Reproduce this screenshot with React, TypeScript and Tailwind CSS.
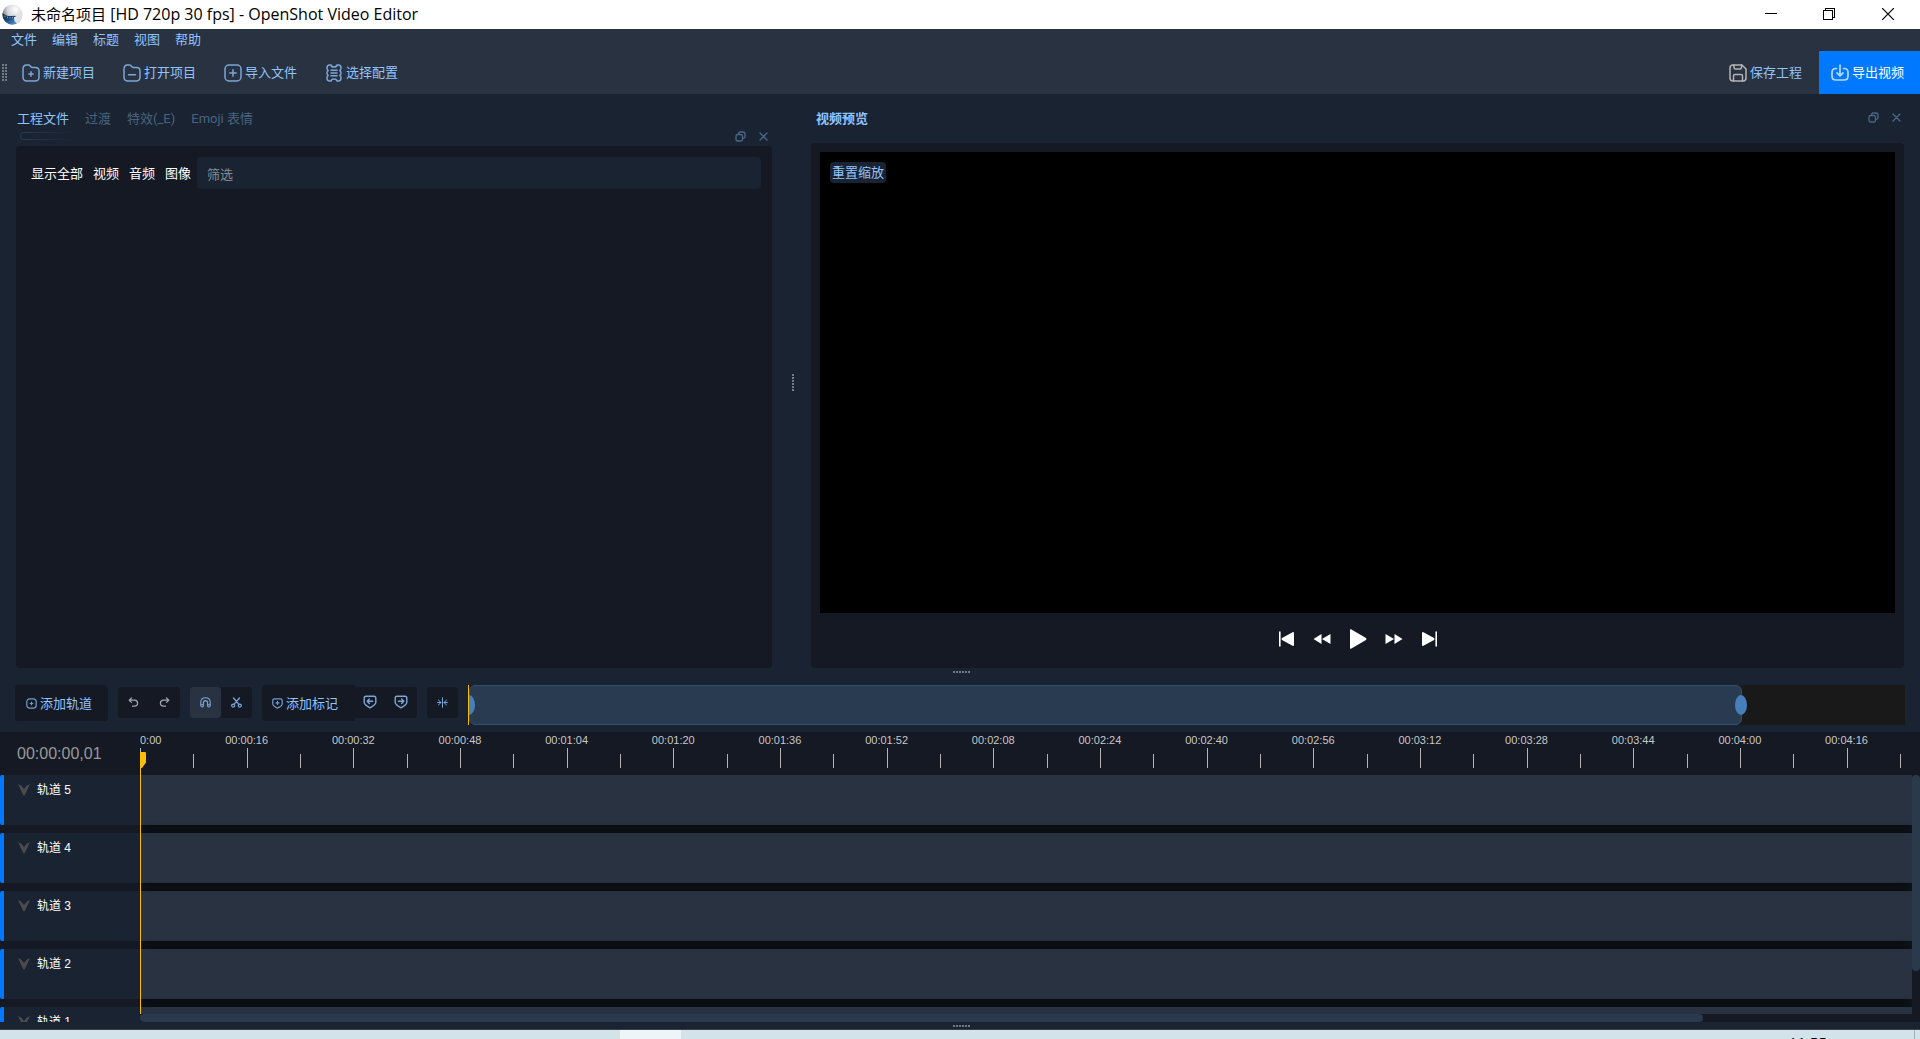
import type { ReactNode } from "react";

type Kids = { children?: ReactNode };

function Svg({ size, className = "", box = 18, width = 1.5, children }: Kids & { size: number; className?: string; box?: number; width?: number }) {
  return (
    <svg
      width={size}
      height={size}
      viewBox={`0 0 ${box} ${box}`}
      fill="none"
      stroke="currentColor"
      strokeWidth={width}
      strokeLinecap="round"
      strokeLinejoin="round"
      className={`shrink-0 ${className}`}
      aria-hidden="true"
    >
      {children}
    </svg>
  );
}

const FOLDER = "M1 5.5 Q1 1 4.5 1 H6.5 Q7.6 1 8.3 2 L8.9 2.8 Q9.4 3.4 10.3 3.4 H13.5 Q17 3.4 17 7 V13 Q17 17 13 17 H5 Q1 17 1 13 Z";

const NewProjectIcon = () => (
  <Svg size={18} className="text-[#7ba6da]">
    <path d={FOLDER} />
    <path d="M9 7.8V12.2M6.8 10H11.2" />
  </Svg>
);
const OpenProjectIcon = () => (
  <Svg size={18} className="text-[#7ba6da]">
    <path d={FOLDER} />
    <path d="M5.5 10.8H12.5" />
  </Svg>
);
const ImportIcon = () => (
  <Svg size={18} className="text-[#7ba6da]">
    <rect x="1" y="1" width="16" height="16" rx="4" />
    <path d="M9 5.8V12.2M5.8 9H12.2" />
  </Svg>
);
const ProfileIcon = () => (
  <Svg size={18} className="text-[#7ba6da]">
    <path d="M4.5 1H6Q6.4 3 9 3T12 1H13.5Q16 1 16 4Q16 6 14.8 6.7Q16 7.4 16 9T14.8 11.3Q16 12 16 14Q16 17 13.5 17H12Q11.6 15 9 15T6 17H4.5Q2 17 2 14Q2 12 3.2 11.3Q2 10.6 2 9T3.2 6.7Q2 6 2 4Q2 1 4.5 1Z" />
    <path d="M6 6.3H12M6 9H12M6 11.7H12" />
  </Svg>
);
const SaveIcon = () => (
  <Svg size={18} className="text-[#b4b4b4]">
    <path d="M4 1H13L17 5V14Q17 17 14 17H4Q1 17 1 14V4Q1 1 4 1Z" />
    <path d="M5 1V3.5Q5 5 6.5 5H11Q12.5 5 12.5 3.5V1M4.5 17V12Q4.5 10.5 6 10.5H12Q13.5 10.5 13.5 12V17" />
  </Svg>
);
const ExportIcon = () => (
  <Svg size={18} className="text-[#b8d9ff]" width={1.7}>
    <path d="M5.5 4.5H5Q1 4.5 1 8.5V12Q1 16 5 16H13Q17 16 17 12V8.5Q17 4.5 13 4.5H12.5" />
    <path d="M9 1V11.5M6 8.8L9 11.8L12 8.8" />
  </Svg>
);

function WindowLogo() {
  return (
    <svg width="21" height="21" viewBox="0 0 21 21" aria-hidden="true">
      <defs>
        <radialGradient id="ball" cx="0.65" cy="0.25" r="0.8">
          <stop offset="0" stopColor="#ffffff" />
          <stop offset="0.5" stopColor="#d3d7da" />
          <stop offset="1" stopColor="#50565c" />
        </radialGradient>
        <linearGradient id="lens" x1="0" y1="0" x2="0.7" y2="1">
          <stop offset="0" stopColor="#1b2c3f" />
          <stop offset="0.5" stopColor="#14406f" />
          <stop offset="1" stopColor="#4c8cc6" />
        </linearGradient>
      </defs>
      <circle cx="10.5" cy="10.5" r="10" fill="url(#ball)" />
      <path d="M0.6 9 Q4 12.6 9.5 12 Q13.5 11.6 14.5 12.4 Q15.5 16.5 13.5 19.8 Q8 21.6 4 18.2 Q0 14.5 0.6 9Z" fill="url(#lens)" />
      <path d="M12 13.2 Q17 12 20.2 8.5 Q21 15.6 15 19.4 Q11.5 17.5 12 13.2Z" fill="#dfe4e8" />
      <path d="M3 11.6V13.2M5.5 12.6V14.2M8 13V14.6M10.5 12.8V14.4" stroke="#7d97ae" strokeWidth="1" fill="none" />
    </svg>
  );
}

function FloatAndClose() {
  return (
    <div className="flex items-center gap-[13px] text-[#4b6787]">
      <button type="button" aria-label="浮动" className="flex">
        <Svg size={11} box={11} width={1.3}>
          <rect x="1" y="3.5" width="6.5" height="6.5" rx="1.8" />
          <path d="M3.6 3Q3.6 1 5.4 1H8Q10 1 10 3V5.4Q10 7.2 8 7.4" />
        </Svg>
      </button>
      <button type="button" aria-label="关闭" className="flex">
        <Svg size={9} box={9} width={1.3}>
          <path d="M1 1L8 8M8 1L1 8" />
        </Svg>
      </button>
    </div>
  );
}

function Dots({ rows = 1, cols = 1 }: { rows?: number; cols?: number }) {
  return (
    <div className="flex gap-px">
      {Array.from({ length: cols }, (_, c) => (
        <div key={c} className="flex flex-col gap-px">
          {Array.from({ length: rows }, (_, r) => (
            <span key={r} className="size-0.5 bg-[#747b85]" />
          ))}
        </div>
      ))}
    </div>
  );
}

function TitleBar() {
  return (
    <header className="flex h-[29px] shrink-0 items-center bg-white text-black">
      <div className="flex items-center gap-2 pl-0.5">
        <WindowLogo />
        <h1 className="pb-0.5 text-base leading-5 [font-family:'Open_Sans','Noto_Sans_CJK_SC',sans-serif]">
          <span className="text-[15px]">未命名项目</span> [HD 720p 30 fps] - OpenShot Video Editor
        </h1>
      </div>
      <div className="mr-0.5 ml-auto flex pb-px">
        <button type="button" aria-label="最小化" className="flex w-[58px] justify-center">
          <svg width="12" height="12" shapeRendering="crispEdges"><path d="M0 5.5H12" stroke="#000" /></svg>
        </button>
        <button type="button" aria-label="还原" className="flex w-[58px] justify-center">
          <svg width="12" height="12" fill="none" stroke="#000" shapeRendering="crispEdges">
            <path d="M0.5 2.5H9.5V11.5H0.5ZM2.5 2.5V0.5H11.5V9.5H9.5" />
          </svg>
        </button>
        <button type="button" aria-label="关闭窗口" className="flex w-[60px] justify-center">
          <svg width="12" height="12"><path d="M0 0L12 12M12 0L0 12" stroke="#000" strokeWidth="1.2" /></svg>
        </button>
      </div>
    </header>
  );
}

function ToolButton({ icon, children }: Kids & { icon: ReactNode }) {
  return (
    <button type="button" className="flex w-[101px] items-center gap-[3px] text-left">
      {icon}
      <span className="whitespace-nowrap">{children}</span>
    </button>
  );
}

function MenuAndToolbar() {
  return (
    <div className="shrink-0 bg-[#283241]">
      <nav className="flex h-[22px] items-center gap-[15px] px-[11px]">
        {["文件", "编辑", "标题", "视图", "帮助"].map((m) => (
          <button type="button" key={m}>{m}</button>
        ))}
      </nav>
      <div className="flex h-[43px] items-center pl-0.5">
        <Dots rows={6} cols={2} />
        <div className="flex pl-[15px]">
          <ToolButton icon={<NewProjectIcon />}>新建项目</ToolButton>
          <ToolButton icon={<OpenProjectIcon />}>打开项目</ToolButton>
          <ToolButton icon={<ImportIcon />}>导入文件</ToolButton>
          <ToolButton icon={<ProfileIcon />}>选择配置</ToolButton>
        </div>
        <button type="button" className="mr-[17px] ml-auto flex items-center gap-[3px]">
          <SaveIcon />
          保存工程
        </button>
        <button type="button" className="flex h-full w-[101px] items-center gap-[3px] bg-[#0078ff] pl-3 text-white">
          <ExportIcon />
          导出视频
        </button>
      </div>
    </div>
  );
}

function FilesDock() {
  return (
    <section className="flex min-w-0 flex-[756] flex-col">
      <div className="flex h-[52px] flex-col">
        <div role="tablist" className="flex h-[38px] shrink-0 items-start gap-4 px-px pt-4">
          <button type="button" role="tab" aria-selected="true">工程文件</button>
          {["过渡", "特效(_E)", "Emoji 表情"].map((t) => (
            <button type="button" role="tab" aria-selected="false" key={t} className="text-[#49637f]">{t}</button>
          ))}
        </div>
        <div className="flex h-2 items-center justify-between pr-1 pl-1">
          <span className="h-2 w-[54px] rounded-full bg-linear-to-r from-[#283d58] to-[#192332] p-px">
            <span className="block h-full rounded-full bg-[#192332]" />
          </span>
          <FloatAndClose />
        </div>
      </div>
      <div className="flex-1 rounded bg-[#141923] px-[11px] py-[11px]">
        <div className="flex items-center text-white">
          <div className="flex gap-2.5 pt-0.5 pl-1">
            {["显示全部", "视频", "音频", "图像"].map((t) => (
              <button type="button" key={t}>{t}</button>
            ))}
          </div>
          <input
            type="text"
            aria-label="筛选"
            placeholder="筛选"
            className="ml-[6px] h-8 min-w-0 flex-1 rounded bg-[#192332] px-2.5 pt-0.5 outline-none placeholder:text-[#868b93]"
          />
        </div>
      </div>
    </section>
  );
}

function PlaybackControls() {
  return (
    <div className="flex h-[55px] items-center justify-center gap-[18px] pb-[3px] text-white [&_svg]:fill-current">
      <button type="button" aria-label="跳到开头">
        <svg width="17" height="20" viewBox="0 0 17 20"><path d="M1 2.5H2.6V17.5H1ZM15 3Q16 3 16 4V16Q16 17 15 17L4 11Q2.8 10 4 9Z" /></svg>
      </button>
      <button type="button" aria-label="快退">
        <svg width="18" height="20" viewBox="0 0 18 20"><path d="M8.5 5V15L0.5 10ZM17.5 5V15L9 10Z" /></svg>
      </button>
      <button type="button" aria-label="播放">
        <svg width="18" height="20" viewBox="0 0 18 20"><path d="M1 1Q1 0 2 0.3L17 9Q18 10 17 11L2 19.7Q1 20 1 19Z" /></svg>
      </button>
      <button type="button" aria-label="快进">
        <svg width="18" height="20" viewBox="0 0 18 20"><path d="M0.5 5V15L9 10ZM9.5 5V15L17.5 10Z" /></svg>
      </button>
      <button type="button" aria-label="跳到结尾">
        <svg width="17" height="20" viewBox="0 0 17 20"><path d="M14.4 2.5H16V17.5H14.4ZM2 3Q1 3 1 4V16Q1 17 2 17L13 11Q14.2 10 13 9Z" /></svg>
      </button>
    </div>
  );
}

function PreviewDock() {
  return (
    <section className="flex min-w-0 flex-[1093] flex-col">
      <div className="flex h-[49px] items-start justify-between pt-4 pr-[3px] pl-[5px]">
        <h2 className="font-bold">视频预览</h2>
        <div className="pt-0.5"><FloatAndClose /></div>
      </div>
      <div className="flex flex-1 flex-col rounded bg-[#141923] px-[9px] pt-[9px]">
        <div className="flex-1 bg-black p-2.5">
          <button type="button" className="flex h-[21px] items-center rounded bg-[#192332] px-0.5">重置缩放</button>
        </div>
        <PlaybackControls />
      </div>
    </section>
  );
}

const Shield = ({ size = 14, children }: Kids & { size?: number }) => (
  <Svg size={size} box={14} width={1.4}>
    <path d="M3 1.2H11Q12.8 1.2 12.8 3V7.5Q12.8 9.6 7 12.8Q1.2 9.6 1.2 7.5V3Q1.2 1.2 3 1.2Z" />
    {children}
  </Svg>
);

function SmallButton({ label, active, children }: Kids & { label: string; active?: boolean }) {
  return (
    <button
      type="button"
      aria-label={label}
      className={`flex h-[31px] w-[31px] items-center justify-center rounded-[3px] pr-px pb-px text-[#7ba6da] ${active ? "bg-[#283241]" : ""}`}
    >
      {children}
    </button>
  );
}

function TimelineToolbar() {
  return (
    <div className="flex h-[47px] shrink-0 items-start pr-[15px] pl-[15px]">
      <button type="button" className="flex h-9 w-[93px] items-center gap-[3px] rounded bg-[#141923] pt-px pl-[11px]">
        <Svg size={11} box={11} width={1.2} className="text-[#6f9dd0]">
          <rect x="0.8" y="0.8" width="9.4" height="9.4" rx="3" />
          <path d="M5.5 4.2V6.8M4.2 5.5H6.8" />
        </Svg>
        添加轨道
      </button>
      <div className="mt-0.5 ml-2.5 flex rounded bg-[#141923]">
        <SmallButton label="撤销">
          <Svg size={11} box={11} width={1.2} className="text-[#a0a4aa]">
            <path d="M3.5 1L1.2 3.2L3.5 5.4M1.4 3.2H6.5Q9.6 3.4 9.6 6.2T6.5 9.2H4.5" />
          </Svg>
        </SmallButton>
        <SmallButton label="重做">
          <Svg size={11} box={11} width={1.2} className="text-[#a0a4aa]">
            <path d="M7.5 1L9.8 3.2L7.5 5.4M9.6 3.2H4.5Q1.4 3.4 1.4 6.2T4.5 9.2H6.5" />
          </Svg>
        </SmallButton>
      </div>
      <div className="mt-0.5 ml-2.5 flex rounded bg-[#141923]">
        <SmallButton label="吸附" active>
          <Svg size={11} box={11} width={1.1}>
            <path d="M0.8 8.5V5.5Q0.8 0.8 5.5 0.8T10.2 5.5V8.5Q10.2 10 9 10T7.6 8.8V5.8Q7.6 3.6 5.5 3.6T3.4 5.8V8.8Q3.4 10 2.2 10T0.8 8.5Z" />
            <path d="M1 7.7H3.3M7.7 7.7H10" />
          </Svg>
        </SmallButton>
        <SmallButton label="剃刀">
          <Svg size={11} box={11} width={1.3}>
            <path d="M2.5 1L7.8 7.2M8.5 1L3.2 7.2" />
            <circle cx="2.2" cy="8.6" r="1.5" />
            <circle cx="8.8" cy="8.6" r="1.5" />
          </Svg>
        </SmallButton>
      </div>
      <div className="ml-2.5 flex items-start">
        <button type="button" className="flex h-9 w-[93px] items-center gap-[3px] rounded-l bg-[#141923] pt-px pl-2.5">
          <Svg size={11} box={11} width={1.2} className="text-[#6f9dd0]">
            <path d="M2.4 0.8H8.6Q10.2 0.8 10.2 2.4V6Q10.2 7.8 5.5 10.2Q0.8 7.8 0.8 6V2.4Q0.8 0.8 2.4 0.8Z" />
            <path d="M5.5 3.4V6.4M4 4.9H7" />
          </Svg>
          添加标记
        </button>
        <div className="mt-0.5 flex rounded-r bg-[#141923]">
          <SmallButton label="上一个标记">
            <Shield><path d="M4.2 6.2H9.6M6.4 4L4.2 6.2L6.4 8.4" /></Shield>
          </SmallButton>
          <SmallButton label="下一个标记">
            <Shield><path d="M4.4 6.2H9.8M7.6 4L9.8 6.2L7.6 8.4" /></Shield>
          </SmallButton>
        </div>
      </div>
      <div className="mt-0.5 ml-2.5 rounded bg-[#141923]">
        <SmallButton label="居中到播放头">
          <Svg size={11} box={11} width={1}>
            <path d="M5.5 0.8V10.2M0.6 5.5H4M1.4 3L4 5.5L1.4 8M10.4 5.5H7M9.6 3L7 5.5L9.6 8" />
          </Svg>
        </SmallButton>
      </div>
      <div className="ml-2.5 flex h-10 min-w-0 flex-1 overflow-hidden border-l border-[#fabe0a] bg-[#191919]">
        <div className="relative w-[1273px] rounded-md border border-[#31506f] bg-[#283b50]">
          <span className="absolute top-[9px] -left-[7px] h-5 w-3 rounded-[50%] bg-[#4680ba]" />
          <span className="absolute top-[9px] -right-[6px] h-5 w-3 rounded-[50%] bg-[#4680ba]" />
        </div>
      </div>
    </div>
  );
}

const SECONDS_PER_MARK = 16;
const PIXELS_PER_MARK = 320 / 3;
const marks = Array.from({ length: 17 }, (_, i) => i * SECONDS_PER_MARK);

function timecode(s: number) {
  const two = (n: number) => String(n).padStart(2, "0");
  return s === 0 ? "0:00" : `00:${two(Math.floor(s / 60))}:${two(s % 60)}`;
}

function Ruler() {
  return (
    <div className="flex h-[43px] shrink-0 bg-[#141923] text-[#c8c8c8] [font-family:'Liberation_Sans',sans-serif]">
      <div className="w-[140px] shrink-0 pt-3 pl-[17px] text-base leading-5 text-[#999999]">00:00:00,01</div>
      <div className="flex min-w-0 flex-1 overflow-x-clip pt-4">
        {marks.map((s) => (
          <div key={s} className="relative flex h-5 shrink-0 items-end" style={{ width: PIXELS_PER_MARK }}>
            <span className={`absolute -top-[15px] left-0 text-[11px] leading-3.5 ${s ? "-translate-x-1/2" : ""}`}>{timecode(s)}</span>
            <span className="h-5 flex-1 border-l border-[#b4b4b4]" />
            <span className="h-3.5 flex-1 border-l border-[#b4b4b4]" />
          </div>
        ))}
      </div>
    </div>
  );
}

function Tracks() {
  return (
    <div className="flex h-[247px] shrink-0 bg-[#141923]">
      <div className="flex min-w-0 flex-1 flex-col gap-2 overflow-hidden">
        {[5, 4, 3, 2, 1].map((n) => (
          <div key={n} className="flex h-[50px] shrink-0">
            <div className="flex w-[140px] shrink-0 items-start gap-[7px] rounded-l-[2px] border-l-4 border-[#0078ff] bg-[#192332] pt-1.5 pl-3.5">
              <svg width="12" height="12" viewBox="0 0 12 12" className="mt-[3px] shrink-0" fill="#4b4b4b" aria-hidden="true">
                <path d="M0 0L3 1.5L6 5L9 1.5L12 0L8 8.5L6 12L4 8.5Z" />
              </svg>
              <span className="text-xs leading-[18px] text-white [font-family:'Liberation_Sans','Noto_Sans_CJK_SC',sans-serif]">轨道 {n}</span>
            </div>
            <div className="min-w-0 flex-1 bg-[#283241] shadow-[0_0_10px_#000] [clip-path:inset(-10px_0)]" />
          </div>
        ))}
      </div>
      <div className="w-2 shrink-0">
        <div className="h-[196px] rounded-full bg-[#2a394b]" />
      </div>
    </div>
  );
}

function Timeline() {
  return (
    <section className="relative shrink-0">
      <Ruler />
      <Tracks />
      <div className="absolute right-0 bottom-0 left-[140px] h-2 bg-[#141923]">
        <div className="h-2 w-[87.8%] rounded-full bg-[#2a394b]" />
      </div>
      <div className="absolute top-5 bottom-2 left-[140px] flex items-start">
        <span className="h-full w-px bg-[#fabe0a]" />
        <svg width="5" height="16" fill="#fabe0a" aria-hidden="true"><path d="M0 0H4Q5 0 5 1V10.5L1 16H0Z" /></svg>
      </div>
    </section>
  );
}

function Taskbar() {
  return (
    <footer className="flex h-2.5 shrink-0 overflow-hidden border-t border-[#3a3f46] bg-[#d3e3ea] text-black">
      <span className="ml-[620px] h-full w-[61px] bg-[#eef5f8]" />
      <span className="mt-0.5 mr-[87px] ml-auto text-[15px] leading-5 [font-family:'Open_Sans',sans-serif]">11:55</span>
      <span className="mr-[5px] w-px bg-[#9fb0b8]" />
    </footer>
  );
}

export default function App() {
  return (
    <div className="flex h-screen flex-col overflow-hidden bg-[#192332] text-[13px] leading-[18px] text-[#91c3ff] [font-family:Roboto,'Noto_Sans_CJK_SC',sans-serif]">
      <TitleBar />
      <MenuAndToolbar />
      <main className="flex min-h-0 flex-1 flex-col">
        <div className="flex min-h-0 flex-1 px-4">
          <FilesDock />
          <div className="flex w-[39px] shrink-0 items-center justify-center pt-0.5 pl-0.5">
            <Dots rows={6} />
          </div>
          <PreviewDock />
        </div>
        <div className="flex h-[17px] shrink-0 justify-center pt-[3px] pl-0.5">
          <Dots cols={6} />
        </div>
        <TimelineToolbar />
        <Timeline />
        <div className="flex h-[7px] shrink-0 justify-center pt-[3px] pl-0.5">
          <Dots cols={6} />
        </div>
      </main>
      <Taskbar />
    </div>
  );
}
